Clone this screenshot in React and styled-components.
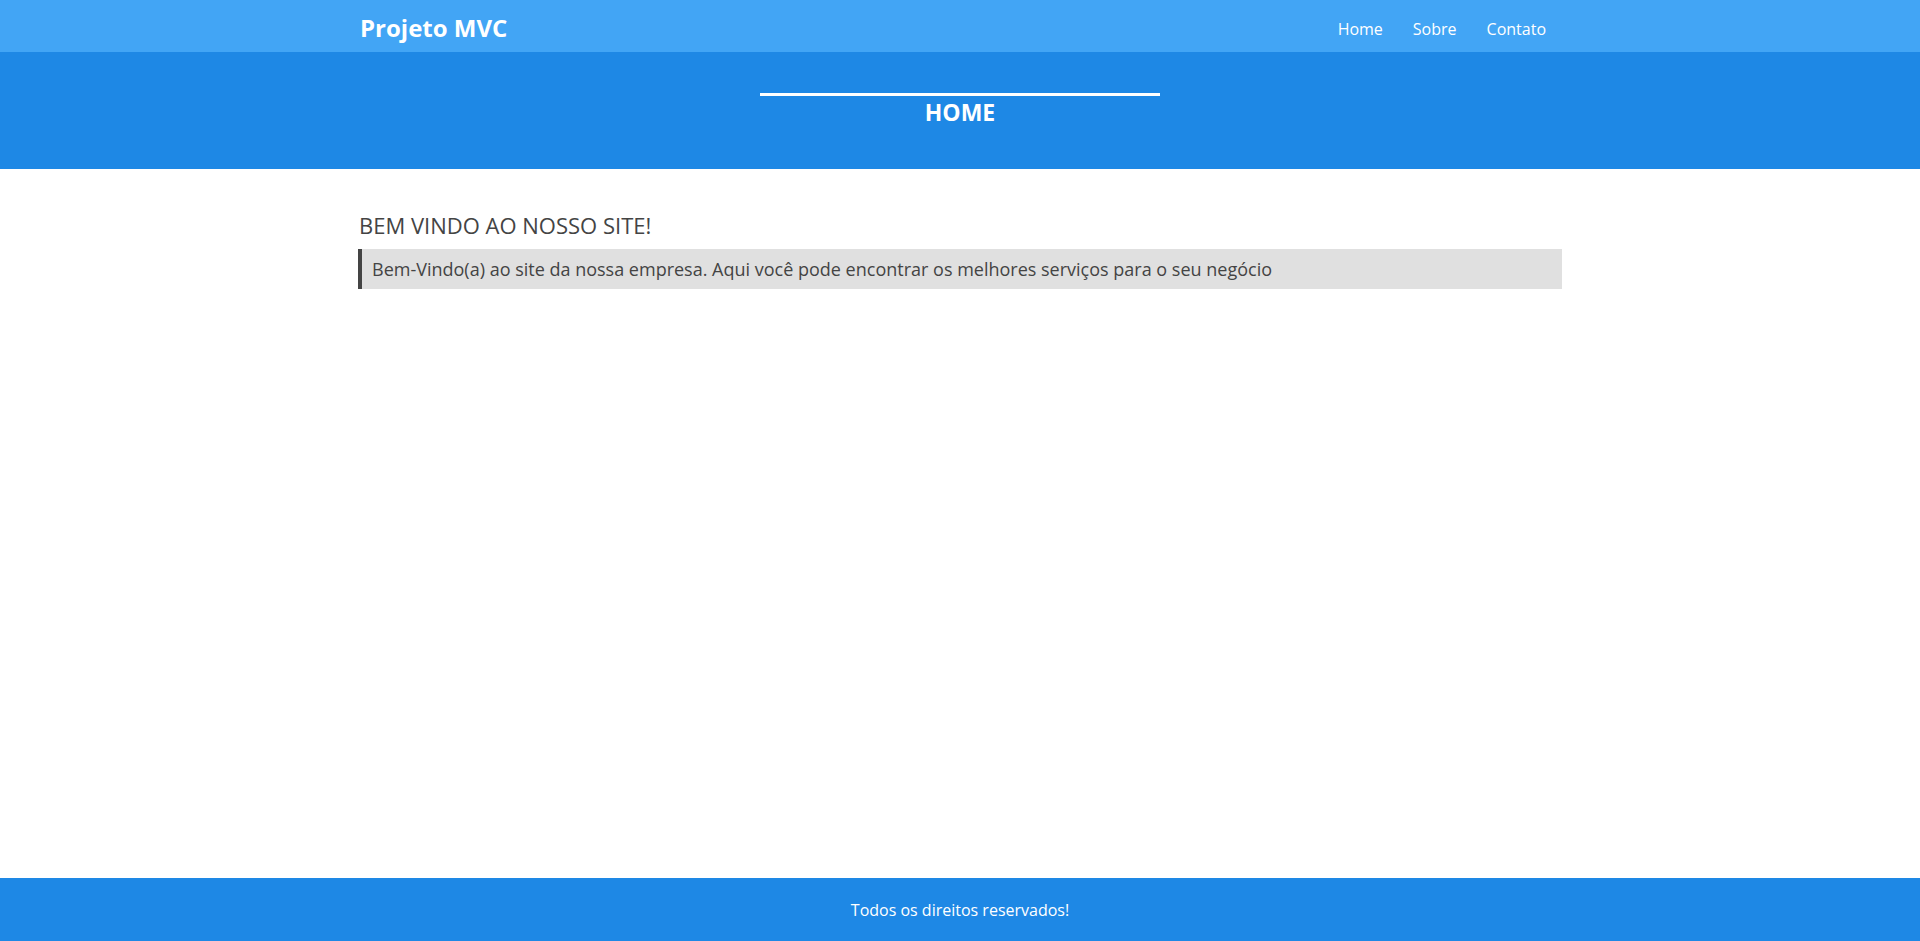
import styled, { createGlobalStyle } from "styled-components";

const GlobalStyle = createGlobalStyle`
  html, body {
    margin: 0;
    padding: 0;
  }
  body {
    font-family: "Open Sans", "Noto Sans", sans-serif;
    color: #444;
    background: #fff;
  }
  * {
    box-sizing: border-box;
  }
`;

const App = () => {
  return (
    <Page>
      <GlobalStyle />
      <TopBar>
        <NavContainer>
          <Brand href="#">Projeto MVC</Brand>
          <NavLinks>
            <NavLink href="#">Home</NavLink>
            <NavLink href="#">Sobre</NavLink>
            <NavLink href="#">Contato</NavLink>
          </NavLinks>
        </NavContainer>
      </TopBar>
      <Hero>
        <HeroTitle>HOME</HeroTitle>
      </Hero>
      <Main>
        <Content>
          <Heading>BEM VINDO AO NOSSO SITE!</Heading>
          <Quote>
            Bem-Vindo(a) ao site da nossa empresa. Aqui você pode encontrar os
            melhores serviços para o seu negócio
          </Quote>
        </Content>
      </Main>
      <Footer>Todos os direitos reservados!</Footer>
    </Page>
  );
};

export default App;

export const Page = styled.div`
  min-height: 100vh;
  display: flex;
  flex-direction: column;
`;

export const TopBar = styled.header`
  background: #42a5f5;
  height: 52px;
`;

export const NavContainer = styled.div`
  width: 1200px;
  height: 100%;
  margin: 0 auto;
  display: flex;
  align-items: center;
  justify-content: space-between;
`;

export const Brand = styled.a`
  color: #fff;
  font-size: 24px;
  font-weight: 700;
  text-decoration: none;
  padding-top: 2px;
`;

export const NavLinks = styled.nav`
  display: flex;
  margin-right: -1px;
  padding-top: 5px;
`;

export const NavLink = styled.a`
  color: #fff;
  font-size: 16px;
  padding: 0 15px;
  text-decoration: none;
`;

export const Hero = styled.section`
  background: #1e88e5;
  height: 117px;
  padding-top: 41px;
`;

export const HeroTitle = styled.h1`
  width: 400px;
  margin: 0 auto;
  border-top: 3px solid #fff;
  color: #fff;
  font-size: 23px;
  font-weight: 700;
  line-height: 1.4;
  text-align: center;
`;

export const Main = styled.main`
  flex: 1;
`;

export const Content = styled.div`
  width: 1204px;
  margin: 0 auto;
  padding-top: 40px;
`;

export const Heading = styled.h2`
  margin: 0 0 7px 1px;
  font-size: 22px;
  font-weight: 400;
  line-height: 1.5;
  color: #444;
`;

export const Quote = styled.blockquote`
  margin: 0;
  background: #e0e0e0;
  border-left: 4px solid #444;
  padding: 0 10px;
  height: 40px;
  display: flex;
  align-items: center;
  font-size: 18px;
  color: #444;
`;

export const Footer = styled.footer`
  background: #1e88e5;
  height: 63px;
  display: flex;
  align-items: center;
  justify-content: center;
  color: #fff;
  font-size: 16px;
`;
